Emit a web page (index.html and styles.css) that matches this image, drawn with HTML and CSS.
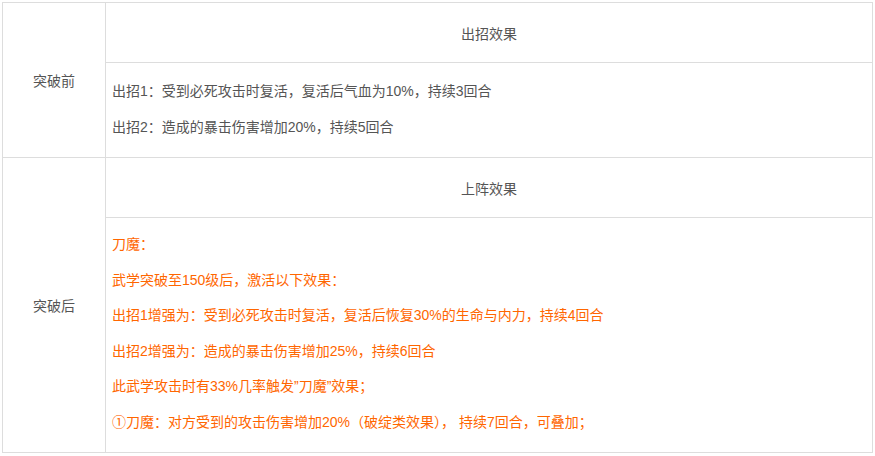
FILE: index.html
```html
<!DOCTYPE html>
<html lang="zh">
<head>
<meta charset="utf-8">
<meta name="viewport" content="width=device-width, initial-scale=1">
<link rel="stylesheet" href="styles.css">
</head>
<body>
	<div id="wrap">
		<table class="skill">
			<colgroup>
				<col class="col-stage">
				<col>
			</colgroup>
			<tr>
				<td class="stage" rowspan="2">突破前</td>
				<td class="head">出招效果</td>
			</tr>
			<tr>
				<td class="effect first">
					<p>出招1：受到必死攻击时复活，复活后气血为10%，持续3回合</p>
					<p>出招2：造成的暴击伤害增加20%，持续5回合</p>
				</td>
			</tr>
			<tr>
				<td class="stage" rowspan="2">突破后</td>
				<td class="head">上阵效果</td>
			</tr>
			<tr>
				<td class="effect orange">
					<p>刀魔：</p>
					<p>武学突破至150级后，激活以下效果：</p>
					<p>出招1增强为：受到必死攻击时复活，复活后恢复30%的生命与内力，持续4回合</p>
					<p>出招2增强为：造成的暴击伤害增加25%，持续6回合</p>
					<p>此武学攻击时有33%几率触发”刀魔”效果；</p>
					<p>①刀魔：对方受到的攻击伤害增加20%（破绽类效果）， 持续7回合，可叠加；</p>
				</td>
			</tr>
		</table>
	</div>
</body>
</html>
```

FILE: styles.css
```css
* {
	box-sizing:border-box;
}

html, body {
	margin:0;
	background:#fff;
}

#wrap{
	padding:2px;
}

.skill{
	width:871px;
	table-layout:fixed;
	border-collapse:collapse;
	font-family:"Liberation Sans", "Noto Sans CJK SC", sans-serif;
	font-size:14px;
	color:#555;
}

.col-stage{
	width:103px;
}

.skill td{
	border:1px solid #ddd;
	padding:0 6px;
}

.stage{
	text-align:center;
	vertical-align:middle;
}

.head{
	height:60px;
	text-align:center;
	vertical-align:middle;
}

.effect{
	vertical-align:top;
}

.effect p{
	margin:11.6px 0;
	line-height:24px;
	white-space:pre;
}

.effect.first{
	padding-top:4px;
	padding-bottom:6px;
}

.effect.first p{
	margin:12px 0;
}

.effect.orange{
	padding-top:2.4px;
	padding-bottom:6px;
	color:#f60;
}
```
